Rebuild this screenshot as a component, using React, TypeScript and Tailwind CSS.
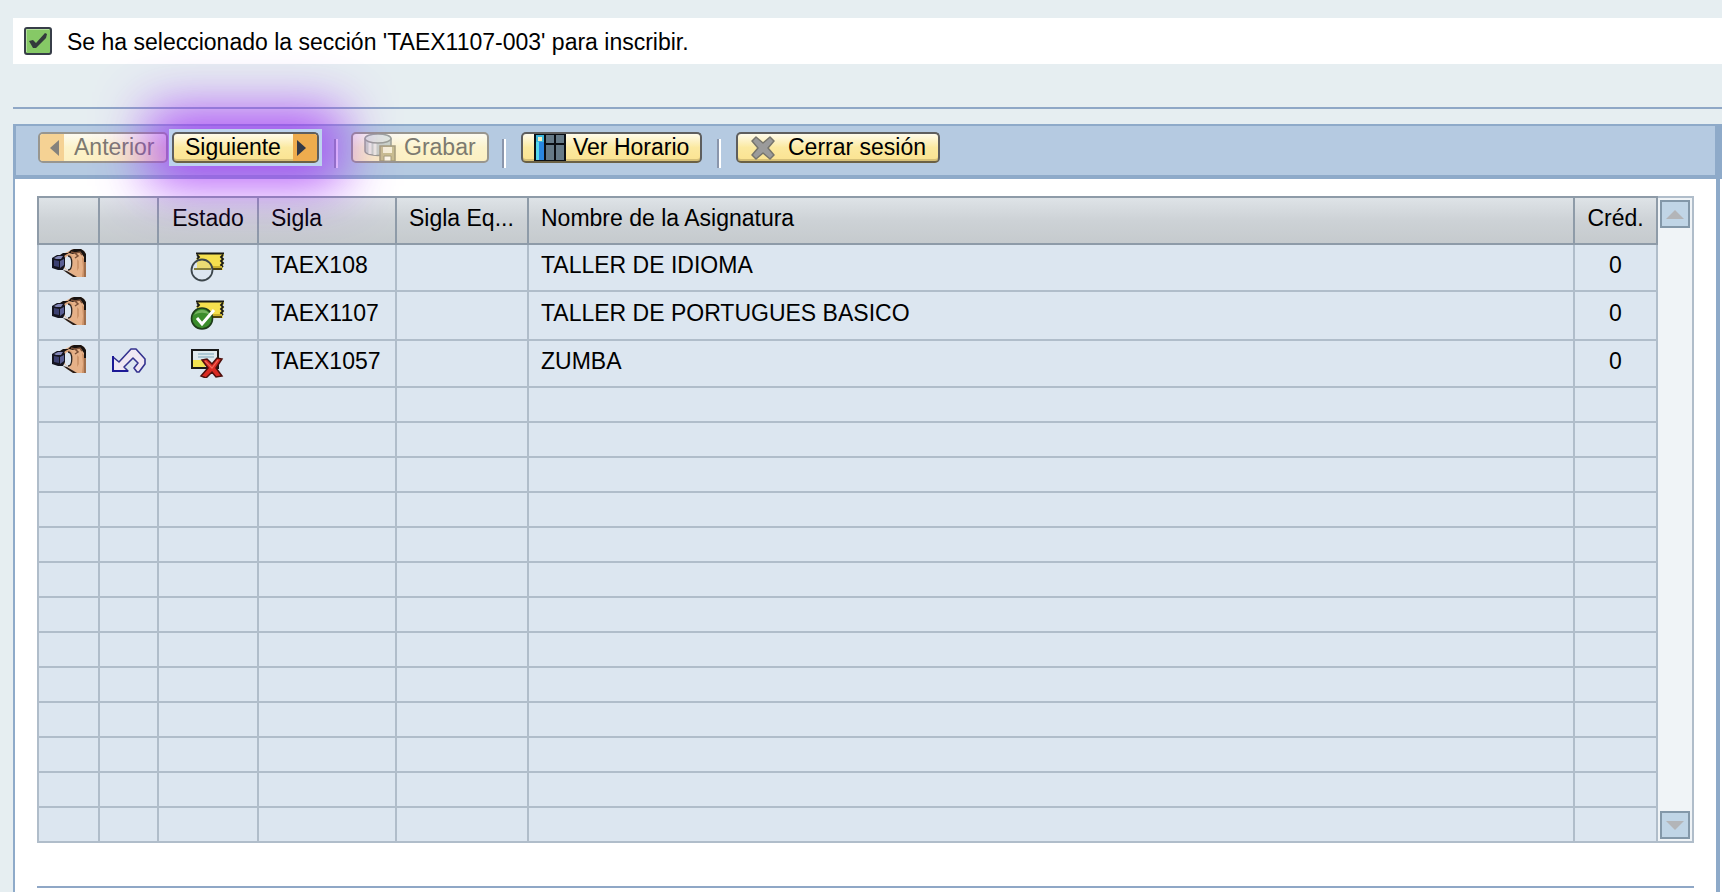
import React from "react";

const HandIcon = () => (
  <svg width="36" height="28" viewBox="0 0 36 28" aria-hidden="true">
    <path d="M9 9l3-4 6-3 4-2h8l4 3 1 4v21H25l-8-6-4-3z" fill="#e6b188" />
    <path d="M9 9V6l3-2 5 0 3-3 3-1h7l3 2 2 3v9h-2V8l-3-4-4-1-4 2-4-1-5 3-3 2z" fill="#181210" />
    <path d="M20 3l4 1 3 3-3 2M24 4l5-1 2 3" fill="none" stroke="#7b5138" strokeWidth="1.500" />
    <path d="M14 6l5-1 3 3-3 1z" fill="#d69d73" />
    <path d="M31 8l2 2v18h-2l1-9z" fill="#cb9066" />
    <path d="M33 13h2v15h-2z" fill="#a06f4c" />
    <path d="M26 10l2 2v7l-2 3z" fill="#cf976d" />
    <path d="M12 21l4 1 5 3 5 3h-4l-6-4z" fill="#2b1b12" />
    <ellipse cx="17" cy="14" rx="4" ry="7" fill="#dce6f0" />
    <path d="M17 7c5 0 5 14 0 14" fill="none" stroke="#2a2523" strokeWidth="1.300" />
    <path d="M1 9l5-3h7l1 3v8l-2 4H7l-6-2z" fill="#14141f" />
    <path d="M3 9l4-2h5l-2 3H5z" fill="#8185b4" />
    <path d="M3 11l5 1v6l-5-1z" fill="#3c4070" />
    <path d="M9 12l4-2v6l-4 3z" fill="#5a5f94" />
  </svg>
);

const UndoIcon = () => (
  <svg width="36" height="28" viewBox="0 0 36 28" aria-hidden="true">
    <path d="M2 11v14h15l-4-4 9-9 5 5-4 5 3 4h2l6-8v-5l-9-10h-5L8 16z" fill="#f0e8f3" stroke="#34328f" strokeWidth="1.600" strokeLinejoin="round" />
    <path d="M2 10v15h15" fill="none" stroke="#1c1996" strokeWidth="2" />
  </svg>
);

const Tag = () => (
  <>
    <path d="M6 1h28v3l-2 2 2 2-2 2 2 2-2 2 1 4H7V13l-1-2 2-2-2-2 2-2z" fill="#f5e04e" />
    <path d="M6 1.500h28M33 3l-2 2 2 2-2 2 2 2-2 2 2 2M7 3l2 2-2 2" fill="none" stroke="#1a1a14" strokeWidth="1.800" />
    <path d="M21 14h11v2H21z" fill="#cbb22d" />
    <path d="M20 17h12" stroke="#4d4413" strokeWidth="2" />
  </>
);

const PendingIcon = () => (
  <svg width="36" height="30" viewBox="0 0 36 30" aria-hidden="true">
    <Tag />
    <circle cx="12" cy="18" r="10.500" fill="#dce6f0" />
    <path d="M7 10l4-2h5l5 5v4H7z" fill="#eadc74" />
    <path d="M4 16h17v2H4z" fill="#85803f" />
    <circle cx="12" cy="18" r="10.500" fill="none" stroke="#3c464b" strokeWidth="1.800" />
  </svg>
);

const ApprovedIcon = () => (
  <svg width="36" height="30" viewBox="0 0 36 30" aria-hidden="true">
    <Tag />
    <circle cx="12" cy="18.500" r="10.500" fill="#3b8d2c" stroke="#1e3d1a" strokeWidth="1.600" />
    <path d="M4 15a9 9 0 0 1 16 0c-5-3-11-3-16 0z" fill="#74b35f" />
    <path d="M7 18l5 6L24 10" fill="none" stroke="#fff" strokeWidth="3" />
  </svg>
);

const RejectedIcon = () => (
  <svg width="36" height="30" viewBox="0 0 36 30" aria-hidden="true">
    <path d="M2 2h26v18H2z" fill="#dfe9ee" stroke="#1a1a1a" strokeWidth="2" />
    <path d="M3 12h12v7H3z" fill="#f2e352" />
    <path d="M8 6h16M8 9h16" stroke="#9dbccb" strokeWidth="1.500" />
    <path d="M12 12l5-1 5 5 5-6 5 1-6 9 6 8-6 1-4-5-6 6-5-2 7-8z" fill="#d92a22" stroke="#4d0f0c" strokeWidth="1.500" />
    <path d="M15 13l7 7 6-8" fill="none" stroke="#f26a5c" strokeWidth="1.200" />
  </svg>
);

const SaveIcon = () => (
  <svg width="32" height="29" viewBox="0 0 32 29" aria-hidden="true">
    <path d="M1 6v12c0 6 26 6 26 0V6z" fill="#a9bfc0" stroke="#5c6a68" strokeWidth="1.500" />
    <path d="M6 9v12M11 10v12" stroke="#e6eff0" strokeWidth="3" />
    <ellipse cx="14" cy="5.500" rx="13" ry="4.500" fill="#cfdedd" stroke="#5c6a68" strokeWidth="1.500" />
    <path d="M16 13h15v15H16z" fill="#a89f6c" stroke="#6d684a" strokeWidth="1.500" />
    <path d="M19 14h9v6h-9z" fill="#f3f0e0" />
    <path d="M20 23h7v5h-7z" fill="#fff" stroke="#6d684a" />
  </svg>
);

const ScheduleIcon = () => (
  <svg width="32" height="29" viewBox="0 0 32 29" aria-hidden="true">
    <path d="M0 0h32v29H0z" fill="#0b0f14" />
    <path d="M2 2h8v25H2z" fill="#2a86e0" />
    <path d="M2 9h3v18H2z" fill="#55d8ee" />
    <path d="M2 2h8v7H2z" fill="#3bb7dc" />
    <path d="M4 4h4v4H4z" fill="#f2ecc0" />
    <path d="M12 2h8v8h-8zM22 2h8v8h-8zM12 12h8v15h-8zM22 12h8v15h-8z" fill="#667a87" />
  </svg>
);

const CloseIcon = () => (
  <svg width="26" height="24" viewBox="0 0 26 24" aria-hidden="true">
    <path d="M2 5l4-4 7 6 7-6 4 4-6 7 6 7-4 4-7-6-7 6-4-4 6-7z" fill="#9b9b9b" stroke="#77756c" strokeWidth="1.500" strokeLinejoin="round" />
  </svg>
);

const CheckIcon = () => (
  <svg width="28" height="28" viewBox="0 0 28 28" aria-hidden="true">
    <rect x="1" y="1" width="26" height="26" rx="2" fill="#86c966" stroke="#373d48" strokeWidth="2" />
    <path d="M2.500 25V2.500H25" fill="none" stroke="#b3df9c" />
    <path d="M5 14l4-1 3 3 9-10 2 1-1 4-10 10H9z" fill="#333b3c" />
  </svg>
);

const buttonBase =
  "flex h-[31px] items-center overflow-hidden rounded-[5px] border-2 bg-linear-to-b leading-[24px] whitespace-nowrap";
const buttonOn =
  "border-[#5e5e5e] border-b-[#6b6145] from-[#fffbea] via-[#fbe9a0] to-[#fbe391] text-black shadow-[inset_0_-2px_0_#d6c078]";
const buttonOff = "border-[#98968f] from-[#fdfbf0] via-[#fcf3cb] to-[#fcf0c2] text-[#7c7a70]";

const Separator = () => <span className="mt-[7px] h-[29px] w-1 shrink-0 border-l-2 border-r-2 border-l-[#8a96ac] border-r-white" />;

const rows = [
  { sigla: "TAEX108", nombre: "TALLER DE IDIOMA", cred: "0", undo: false, icon: <PendingIcon />, height: "h-[47px]" },
  { sigla: "TAEX1107", nombre: "TALLER DE PORTUGUES BASICO", cred: "0", undo: false, icon: <ApprovedIcon />, height: "h-[49px]" },
  { sigla: "TAEX1057", nombre: "ZUMBA", cred: "0", undo: true, icon: <RejectedIcon />, height: "h-[47px]" },
];
const emptyRows = Array.from({ length: 13 }, (_, i) => i);
const columns = Array.from({ length: 7 }, (_, i) => i);

const th = "border-2 border-[#8e9ba8] p-0 pb-[6px] font-normal";
const td = "border-2 border-[#b0bdca] p-0";

const ScrollButton = ({ label, down = false }: { label: string; down?: boolean }) => (
  <button aria-label={label} className="flex h-[28px] w-[30px] items-center justify-center border-2 border-[#8398a9] bg-[#c0d5e6]">
    <svg width="18" height="9" viewBox="0 0 18 9" aria-hidden="true">
      <path d={down ? "M0 0h18L9 9z" : "M0 9h18L9 0z"} fill="#b3b5b8" />
    </svg>
  </button>
);

export default function App() {
  return (
    <div className="flex min-h-screen flex-col bg-[#e6eef1] pt-[18px] pl-[13px] font-['Liberation_Sans',Arial,sans-serif] text-[23px] leading-[26px] text-black">
      <div role="status" className="flex h-[46px] items-center gap-[15px] bg-white pl-[11px]">
        <CheckIcon />
        <span className="pt-[2px]">Se ha seleccionado la sección 'TAEX1107-003' para inscribir.</span>
      </div>
      <hr className="mt-[43px] border-0 border-t-2 border-[#8fa7c6]" />

      <main className="mt-[15px] flex grow flex-col bg-white">
        <div role="toolbar" className="flex h-[55px] items-start border-t-2 border-r-[7px] border-b-4 border-l-[3px] border-[#8eaac9] bg-[#b5cae1] pt-[6px] pl-[22px]">
          <button disabled className={`${buttonBase} ${buttonOff} w-[130px]`}>
            <span className="flex h-full w-6 shrink-0 items-center justify-end bg-[#f5d294] pr-[5px]">
              <svg width="9" height="16" viewBox="0 0 9 16" aria-hidden="true"><path d="M9 0v16L0 8z" fill="#85827c" /></svg>
            </span>
            <span className="pb-[2px] pl-[10px]">Anterior</span>
          </button>
          <div className="relative z-10 -my-[3px] -mr-[3px] ml-px bg-[#bdd3ee] p-[3px] shadow-[0_0_52px_20px_#a02ff8cc]">
            <button className={`${buttonBase} ${buttonOn} w-[147px] justify-between`}>
              <span className="pb-[2px] pl-[11px]">Siguiente</span>
              <span className="flex h-full w-6 items-center bg-[#eeac4e] pl-1">
                <svg width="9" height="16" viewBox="0 0 9 16" aria-hidden="true"><path d="M0 0v16l9-8z" fill="#333947" /></svg>
              </span>
            </button>
          </div>
          <div className="flex pl-[15px]">
            <Separator />
            <button disabled className={`${buttonBase} ${buttonOff} ml-[13px] w-[138px] gap-2 pl-[11px]`}>
              <span className="opacity-60"><SaveIcon /></span>
              <span className="pb-[2px]">Grabar</span>
            </button>
            <div className="w-[13px]" />
            <Separator />
            <button className={`${buttonBase} ${buttonOn} ml-[15px] w-[181px] gap-[7px] pl-[11px]`}>
              <ScheduleIcon />
              <span className="pb-[2px]">Ver Horario</span>
            </button>
            <div className="w-[15px]" />
            <Separator />
            <button className={`${buttonBase} ${buttonOn} ml-[15px] w-[204px] gap-3 pl-[12px]`}>
              <CloseIcon />
              <span className="pb-[2px]">Cerrar sesión</span>
            </button>
          </div>
        </div>

        <div className="mr-[2px] flex grow flex-col border-r-4 border-l-2 border-[#8eaac9] bg-white pt-[17px] pr-[22px] pl-[22px]">
          <div className="flex">
            <table className="grow table-fixed border-collapse bg-[#dce6f0]">
              <colgroup>
                <col className="w-[61px]" />
                <col className="w-[59px]" />
                <col className="w-[100px]" />
                <col className="w-[138px]" />
                <col className="w-[132px]" />
                <col />
                <col className="w-[83px]" />
              </colgroup>
              <thead>
                <tr className="h-[47px] bg-linear-to-b from-[#dfe4e8] via-[#cdd2d6] to-[#c5cacd] text-left">
                  <th className={th} aria-label="Detalle" />
                  <th className={th} aria-label="Deshacer" />
                  <th className={`${th} text-center`}>Estado</th>
                  <th className={`${th} pl-3`}>Sigla</th>
                  <th className={`${th} pl-3`}>Sigla Eq...</th>
                  <th className={`${th} pl-3`}>Nombre de la Asignatura</th>
                  <th className={`${th} text-center`}>Créd.</th>
                </tr>
              </thead>
              <tbody>
                {rows.map((r) => (
                  <tr key={r.sigla} className={r.height}>
                    <td className={td}><button aria-label={`Seleccionar ${r.sigla}`} className="mx-auto mb-[10px] block"><HandIcon /></button></td>
                    <td className={td}>{r.undo && <button aria-label="Deshacer" className="mx-auto mb-2 block"><UndoIcon /></button>}</td>
                    <td className={td}><div className="flex justify-center pb-[2px]">{r.icon}</div></td>
                    <td className={`${td} pb-[6px] pl-3`}>{r.sigla}</td>
                    <td className={td} />
                    <td className={`${td} pb-[6px] pl-3`}>{r.nombre}</td>
                    <td className={`${td} pb-[6px] text-center`}>{r.cred}</td>
                  </tr>
                ))}
                {emptyRows.map((i) => (
                  <tr key={i} className="h-[35px]">
                    {columns.map((c) => <td key={c} className={td} />)}
                  </tr>
                ))}
              </tbody>
            </table>
            <div className="flex w-[36px] flex-col items-center justify-between border-2 border-l-0 border-[#b0bdca] bg-[#f0f4f7] py-[2px]">
              <ScrollButton label="Subir" />
              <ScrollButton label="Bajar" down />
            </div>
          </div>
          <hr className="mt-[43px] border-0 border-t-2 border-[#8fa7c6]" />
        </div>
      </main>
    </div>
  );
}
